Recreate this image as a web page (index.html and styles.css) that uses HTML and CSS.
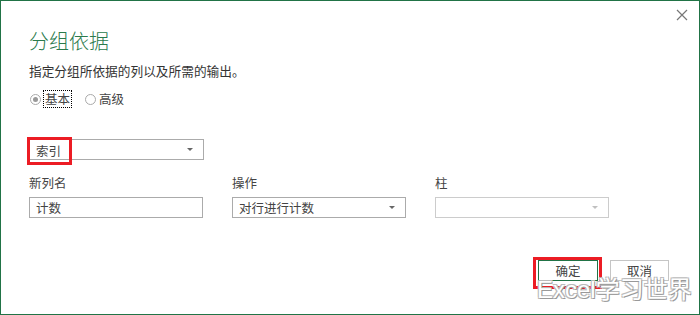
FILE: index.html
```html
<!DOCTYPE html>
<html lang="zh-CN">

<head>
    <meta charset="UTF-8">
    <link rel="stylesheet" href="styles.css">
    <title>分组依据</title>
</head>

<body>
    <div class="dialogo">
        <span class="cerrar">
            <svg width="12" height="12" viewBox="0 0 12 12"><path d="M1 1 L11 11 M11 1 L1 11" stroke="#777" stroke-width="1.2" fill="none"/></svg>
        </span>
        <h1 class="titulo">分组依据</h1>
        <p class="subtitulo">指定分组所依据的列以及所需的输出。</p>

        <div class="radios">
            <label class="radio"><span class="circulo marcado"></span><span class="foco">基本</span></label>
            <label class="radio"><span class="circulo"></span><span>高级</span></label>
        </div>

        <div class="fila-grupo">
            <div class="combo">
                <span class="marca-roja">索引</span>
                <span class="flecha"></span>
            </div>
        </div>

        <div class="campos">
            <div class="campo">
                <div class="etiqueta">新列名</div>
                <div class="caja">计数</div>
            </div>
            <div class="campo">
                <div class="etiqueta">操作</div>
                <div class="combo"><span>对行进行计数</span><span class="flecha"></span></div>
            </div>
            <div class="campo">
                <div class="etiqueta">柱</div>
                <div class="combo deshabilitado"><span></span><span class="flecha"></span></div>
            </div>
        </div>

        <div class="botones">
            <span class="marco-rojo"><span class="boton principal">确定</span></span>
            <span class="boton">取消</span>
        </div>

        <div class="marca-agua">Excel学习世界</div>
    </div>
</body>

</html>
```

FILE: styles.css
```css
body {
    margin: 0;
    font-family: "Noto Sans CJK SC", sans-serif;
    color: #444;
    background-color: #fff;
}

.dialogo {
    position: relative;
    width: 700px;
    height: 315px;
    box-sizing: border-box;
    border: 1px solid #217346;
    padding: 0 0 0 28px;
}

.cerrar {
    position: absolute;
    top: 8px;
    right: 11px;
    width: 12px;
    height: 12px;
}

.cerrar svg {
    display: block;
}

.titulo {
    margin: 0;
    padding-top: 26px;
    font-size: 20px;
    font-weight: 300;
    line-height: 28px;
    color: #2a7a4c;
}

.subtitulo {
    margin: 7px 0 0;
    font-size: 12.7px;
    line-height: 18px;
    color: #333;
}

.radios {
    display: flex;
    gap: 13px;
    margin-top: 10px;
    height: 18px;
    font-size: 12.5px;
    line-height: 16px;
}

.radio {
    display: flex;
    align-items: center;
    gap: 3px;
    margin-left: 1px;
}

.circulo {
    width: 9px;
    height: 9px;
    border: 1px solid #aaa;
    border-radius: 50%;
    position: relative;
}

.circulo.marcado::after {
    content: "";
    position: absolute;
    left: 2px;
    top: 2px;
    width: 5px;
    height: 5px;
    border-radius: 50%;
    background-color: #999;
}

.foco {
    outline: 1px dotted #000;
    padding: 0 1px;
}

.fila-grupo {
    margin-top: 31px;
}

.combo,
.caja {
    width: 174px;
    height: 21px;
    box-sizing: border-box;
    border: 1px solid #ababab;
    display: flex;
    align-items: center;
    justify-content: space-between;
    padding: 0 6px 0 6px;
    font-size: 12.5px;
}

.fila-grupo .combo {
    width: 175px;
    padding-left: 0;
}

.flecha {
    width: 0;
    height: 0;
    border-left: 3px solid transparent;
    border-right: 3px solid transparent;
    border-top: 3px solid #666;
    margin-right: 4px;
}

.marca-roja {
    position: relative;
    left: -3px;
    top: 1px;
    box-sizing: border-box;
    padding: 0 0 0 6px;
    border: 3px solid #ec1c24;
    width: 45px;
    height: 28px;
    line-height: 22px;
    margin: -6px 0;
}

.deshabilitado {
    border-color: #ccc;
}

.deshabilitado .flecha {
    border-top-color: #c0c0c0;
}

.campos {
    display: flex;
    gap: 29px;
    margin-top: 14px;
}

.etiqueta {
    font-size: 12.5px;
    line-height: 18px;
    margin-bottom: 5px;
}

.botones {
    display: flex;
    justify-content: flex-end;
    align-items: flex-start;
    gap: 8px;
    margin-top: 42px;
    padding-right: 30px;
}

.marco-rojo {
    border: 3px solid #ec1c24;
    padding: 0 1px 5px 2px;
    margin-top: -3px;
}

.boton {
    display: block;
    width: 59px;
    height: 21px;
    box-sizing: border-box;
    border: 1px solid #c5c5c5;
    text-align: center;
    font-size: 12.5px;
    line-height: 19px;
}

.boton.principal {
    width: 60px;
    border-color: #217346;
}

.marca-agua {
    position: absolute;
    left: 536px;
    top: 275px;
    font-family: "Liberation Sans", "Noto Sans CJK SC", sans-serif;
    font-size: 24px;
    line-height: 28px;
    color: #fff;
    text-shadow: 1px 1px 0 #999, -1px -1px 0 #bbb, 1px -1px 0 #bbb, -1px 1px 0 #bbb;
}
```
